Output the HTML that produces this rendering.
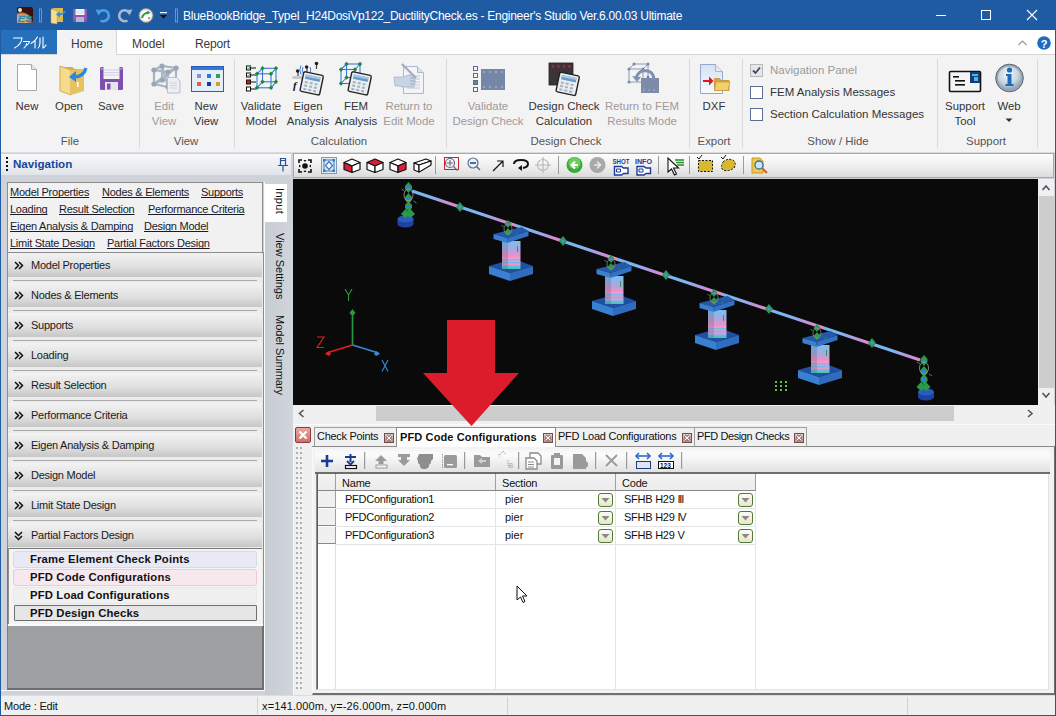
<!DOCTYPE html>
<html><head><meta charset="utf-8">
<style>
*{margin:0;padding:0;box-sizing:border-box}
html,body{width:1056px;height:716px;overflow:hidden;background:#f0f0f0;font-family:"Liberation Sans",sans-serif;position:relative}
.a{position:absolute}
.t{position:absolute;white-space:nowrap;line-height:1;text-decoration-skip-ink:none}
svg{position:absolute;overflow:visible}
</style></head><body>

<div class="a" style="left:0;top:0;width:1056px;height:30px;background:#1f5ba2"></div>
<svg style="left:0;top:0" width="200" height="30">
 <defs><radialGradient id="esg" cx="0.3" cy="0.7" r="0.8"><stop offset="0" stop-color="#f8d8a8"/><stop offset="0.6" stop-color="#d89868"/><stop offset="1" stop-color="#5a2010"/></radialGradient></defs>
 <rect x="17" y="7" width="16" height="16" rx="2" fill="#3a1008"/>
 <path d="M17 13 q6 -3 13 3 q2 3 3 7 h-16z" fill="url(#esg)"/><rect x="17" y="7" width="16" height="16" rx="2" fill="none"/>
 <circle cx="20" cy="10" r="2" fill="#e8e8e0"/>
 <text x="17.5" y="22" font-family="Liberation Sans" font-weight="bold" font-style="italic" font-size="8.5" fill="#28a8c8" stroke="#1a6a88" stroke-width="0.3" textLength="15" lengthAdjust="spacingAndGlyphs">ES</text>
 <rect x="39.5" y="9" width="2" height="13" fill="none" stroke="#8ab0d8" stroke-width="0.7"/>
 <path d="M51 9 l3 -1 h9 v14 h-9 l-3 1z" fill="#e0b850"/><path d="M51 9 l6 2 v13 l-6 -1z" fill="#f6e090" stroke="#c8a040" stroke-width="0.5"/>
 <path d="M65 11 q-1 3 -6 3.5" stroke="#2a90e8" stroke-width="2" fill="none"/><path d="M56 14.5 l4 -3 v6z" fill="#2a90e8"/>
 <rect x="73" y="9" width="14" height="13" rx="1" fill="#8a58b8"/><rect x="75.5" y="9" width="9" height="6" fill="#f4f4f8"/><path d="M76 11 h8 M76 13 h8" stroke="#c8c8d8" stroke-width="0.6"/><rect x="76" y="17" width="8" height="5" fill="#b8b8c0"/>
 <path d="M98.5 13 a5.5 5.5 0 1 1 2 7.5" stroke="#4aa0e8" stroke-width="2.6" fill="none"/><path d="M95.5 9.5 l6.5 0.5 l-3.5 5.5z" fill="#4aa0e8"/>
 <path d="M129.5 13 a5.5 5.5 0 1 0 -2 7.5" stroke="#a8b8cc" stroke-width="2.6" fill="none"/><path d="M132.5 9.5 l-6.5 0.5 l3.5 5.5z" fill="#a8b8cc"/>
 <circle cx="146" cy="15.5" r="7" fill="#e8e8e8" stroke="#8a8a8a" stroke-width="1"/><circle cx="146" cy="15.5" r="5" fill="#fff"/>
 <path d="M142 18 q1 -5 7 -5.5" stroke="#30a040" stroke-width="2.2" fill="none"/><path d="M147.5 10.5 l3 2.5 l-3.5 1.5z" fill="#30a040"/><circle cx="149" cy="18" r="0.9" fill="#d04040"/>
 <rect x="160" y="12" width="7" height="1.2" fill="#fff"/><path d="M160 15 h7 l-3.5 3.5z" fill="#111"/>
 <rect x="175.5" y="9" width="2" height="13" fill="none" stroke="#8ab0d8" stroke-width="0.7"/>
</svg>
<div class="t" style="left:183px;top:10px;font-size:12px;color:#fff;letter-spacing:-0.27px">BlueBookBridge_TypeI_H24DosiVp122_DuctilityCheck.es - Engineer's Studio Ver.6.00.03 Ultimate</div>
<svg style="left:920px;top:0" width="136" height="30">
 <rect x="16" y="15" width="10" height="1" fill="#fff"/>
 <rect x="61.5" y="10.5" width="9" height="9" fill="none" stroke="#fff" stroke-width="1"/>
 <path d="M107 10 l10 10 M117 10 l-10 10" stroke="#fff" stroke-width="1.1"/>
</svg>
<div class="a" style="left:0;top:0;width:1px;height:716px;background:#1f5ba2;z-index:9"></div>
<div class="a" style="left:1055px;top:0;width:1px;height:716px;background:#1f5ba2;z-index:9"></div>
<div class="a" style="left:0;top:715px;width:1056px;height:1px;background:#1f5ba2;z-index:9"></div>
<div class="a" style="left:1px;top:30px;width:1054px;height:25px;background:#fff"></div>
<div class="a" style="left:1px;top:54px;width:1054px;height:1px;background:#d5d5d5"></div>
<div class="a" style="left:1px;top:30px;width:56px;height:24px;background:#2470bd"></div>
<svg style="left:0;top:30px" width="60" height="25">
 <g stroke="#fff" stroke-width="1.1" fill="none" stroke-linecap="round">
 <path d="M13.5 8 h8.5 q-0.5 6.5 -7.5 10"/>
 <path d="M23.5 11.5 h6 q-0.5 2.5 -2.5 3.5 M26.5 13.5 q0 3 -2.5 4.5"/>
 <path d="M37.5 7 q-2 4 -6.5 6.5 M35 10.5 v7.5"/>
 <path d="M40 8 v5 q0 3 -1.8 5 M43 7 v11 q1.8 -0.8 3 -3"/>
 </g></svg>
<div class="a" style="left:57px;top:30px;width:60px;height:25px;background:#f3f3f3;border-right:1px solid #d5d5d5"></div>
<div class="t" style="left:71px;top:38px;font-size:12px;color:#3b3b3b">Home</div>
<div class="t" style="left:132px;top:38px;font-size:12px;color:#3b3b3b">Model</div>
<div class="t" style="left:195px;top:38px;font-size:12px;color:#3b3b3b;letter-spacing:-0.2px">Report</div>
<svg style="left:1010px;top:30px" width="46" height="25">
 <path d="M8.5 15 l4 -4 l4 4" stroke="#9a9a9a" stroke-width="1.2" fill="none"/>
 <circle cx="34" cy="13" r="6.8" fill="#1e6cc0"/>
 <text x="34" y="17.5" text-anchor="middle" font-family="Liberation Sans" font-weight="bold" font-size="11" fill="#fff">?</text>
</svg>
<div class="a" style="left:1px;top:55px;width:1054px;height:97px;background:#f3f3f3"></div>
<div class="a" style="left:1px;top:152px;width:1054px;height:1px;background:#d8dadd"></div>
<div class="a" style="left:139px;top:59px;width:1px;height:89px;background:#dadada"></div>
<div class="a" style="left:234px;top:59px;width:1px;height:89px;background:#dadada"></div>
<div class="a" style="left:446px;top:59px;width:1px;height:89px;background:#dadada"></div>
<div class="a" style="left:689px;top:59px;width:1px;height:89px;background:#dadada"></div>
<div class="a" style="left:742px;top:59px;width:1px;height:89px;background:#dadada"></div>
<div class="a" style="left:937px;top:59px;width:1px;height:89px;background:#dadada"></div>
<div class="a" style="left:1037px;top:59px;width:1px;height:89px;background:#dadada"></div>
<div class="t" style="left:-33px;width:120px;text-align:center;top:100.5px;font-size:11.4px;color:#333">New</div>
<div class="t" style="left:9px;width:120px;text-align:center;top:100.5px;font-size:11.4px;color:#333">Open</div>
<div class="t" style="left:51px;width:120px;text-align:center;top:100.5px;font-size:11.4px;color:#333">Save</div>
<div class="t" style="left:10px;width:120px;text-align:center;top:135.5px;font-size:11.4px;color:#555">File</div>
<div class="t" style="left:104px;width:120px;text-align:center;top:100.5px;font-size:11.4px;color:#a09a98">Edit</div>
<div class="t" style="left:104px;width:120px;text-align:center;top:115.5px;font-size:11.4px;color:#a09a98">View</div>
<div class="t" style="left:146px;width:120px;text-align:center;top:100.5px;font-size:11.4px;color:#333">New</div>
<div class="t" style="left:146px;width:120px;text-align:center;top:115.5px;font-size:11.4px;color:#333">View</div>
<div class="t" style="left:126px;width:120px;text-align:center;top:135.5px;font-size:11.4px;color:#555">View</div>
<div class="t" style="left:201px;width:120px;text-align:center;top:100.5px;font-size:11.4px;color:#333">Validate</div>
<div class="t" style="left:201px;width:120px;text-align:center;top:115.5px;font-size:11.4px;color:#333">Model</div>
<div class="t" style="left:248px;width:120px;text-align:center;top:100.5px;font-size:11.4px;color:#333">Eigen</div>
<div class="t" style="left:248px;width:120px;text-align:center;top:115.5px;font-size:11.4px;color:#333">Analysis</div>
<div class="t" style="left:296px;width:120px;text-align:center;top:100.5px;font-size:11.4px;color:#333">FEM</div>
<div class="t" style="left:296px;width:120px;text-align:center;top:115.5px;font-size:11.4px;color:#333">Analysis</div>
<div class="t" style="left:349px;width:120px;text-align:center;top:100.5px;font-size:11.4px;color:#a09a98">Return to</div>
<div class="t" style="left:349px;width:120px;text-align:center;top:115.5px;font-size:11.4px;color:#a09a98">Edit Mode</div>
<div class="t" style="left:279px;width:120px;text-align:center;top:135.5px;font-size:11.4px;color:#555">Calculation</div>
<div class="t" style="left:428px;width:120px;text-align:center;top:100.5px;font-size:11.4px;color:#a09a98">Validate</div>
<div class="t" style="left:428px;width:120px;text-align:center;top:115.5px;font-size:11.4px;color:#a09a98">Design Check</div>
<div class="t" style="left:504px;width:120px;text-align:center;top:100.5px;font-size:11.4px;color:#333">Design Check</div>
<div class="t" style="left:504px;width:120px;text-align:center;top:115.5px;font-size:11.4px;color:#333">Calculation</div>
<div class="t" style="left:582px;width:120px;text-align:center;top:100.5px;font-size:11.4px;color:#a09a98">Return to FEM</div>
<div class="t" style="left:582px;width:120px;text-align:center;top:115.5px;font-size:11.4px;color:#a09a98">Results Mode</div>
<div class="t" style="left:506px;width:120px;text-align:center;top:135.5px;font-size:11.4px;color:#555">Design Check</div>
<div class="t" style="left:654px;width:120px;text-align:center;top:100.5px;font-size:11.4px;color:#333">DXF</div>
<div class="t" style="left:654px;width:120px;text-align:center;top:135.5px;font-size:11.4px;color:#555">Export</div>
<div class="t" style="left:778px;width:120px;text-align:center;top:135.5px;font-size:11.4px;color:#555">Show / Hide</div>
<div class="t" style="left:905px;width:120px;text-align:center;top:100.5px;font-size:11.4px;color:#333">Support</div>
<div class="t" style="left:905px;width:120px;text-align:center;top:115.5px;font-size:11.4px;color:#333">Tool</div>
<div class="t" style="left:949px;width:120px;text-align:center;top:100.5px;font-size:11.4px;color:#333">Web</div>
<div class="t" style="left:926px;width:120px;text-align:center;top:135.5px;font-size:11.4px;color:#555">Support</div>
<svg style="left:1005px;top:118px" width="10" height="6"><path d="M0.5 0.5 h7 l-3.5 3.5z" fill="#333"/></svg>
<div class="a" style="left:750px;top:64px;width:13px;height:13px;background:#e6e6e6;border:1px solid #b8b8b8"></div>
<svg style="left:750px;top:64px" width="13" height="13"><path d="M3 6.5 l2.5 2.5 l4.5 -5.5" stroke="#3a4a66" stroke-width="1.8" fill="none"/></svg>
<div class="t" style="left:770px;top:65px;font-size:11.5px;color:#9a9a9a">Navigation Panel</div>
<div class="a" style="left:750px;top:86px;width:13px;height:13px;background:#fff;border:1px solid #5a6e96"></div>
<div class="t" style="left:770px;top:87px;font-size:11.5px;color:#333">FEM Analysis Messages</div>
<div class="a" style="left:750px;top:108px;width:13px;height:13px;background:#fff;border:1px solid #5a6e96"></div>
<div class="t" style="left:770px;top:109px;font-size:11.5px;color:#333">Section Calculation Messages</div>
<svg style="left:0;top:55px" width="1056" height="45">
 <!-- New -->
 <path d="M17.5 9.5 h14 l5 5 v21 h-19z" fill="#fff" stroke="#a8a8a8"/><path d="M31.5 9.5 v5 h5" fill="#e8e8e8" stroke="#a8a8a8"/>
 <!-- Open -->
 <path d="M62 12 h10 l3 2 h9 v22 h-22z" fill="#d8b048"/>
 <path d="M60 11 l11 4 v25 l-11 -4z" fill="#f4dc8c" stroke="#c8a040" stroke-width="0.8"/>
 <path d="M71 15 l13 -1 v22 l-13 4z" fill="#e6c260"/>
 <path d="M86 13 q-2 8 -11 9" stroke="#2a88e0" stroke-width="3.2" fill="none"/><path d="M69 22 l7 -6 v11z" fill="#2a88e0"/>
 <rect x="77" y="27" width="1.5" height="5" fill="#fff"/>
 <!-- Save -->
 <rect x="100" y="12" width="23" height="23" rx="1.5" fill="#7d4fb0"/>
 <rect x="103.5" y="12" width="16" height="12" fill="#f4f4f8"/><path d="M104 15 h15 M104 17.5 h15 M104 20 h15" stroke="#c8c8d8" stroke-width="0.8"/>
 <rect x="105" y="27" width="13" height="8" fill="#e4e4ea"/><rect x="107" y="28.5" width="3.5" height="6" fill="#7d4fb0"/>
 <circle cx="102" cy="14" r="0.8" fill="#e0d0f0"/><circle cx="121" cy="14" r="0.8" fill="#e0d0f0"/>
 <!-- Edit View (gray) -->
 <g stroke="#aab4c4" stroke-width="2.2" fill="none" stroke-linecap="round"><path d="M154 15 l8 -4 l14 2 l-8 4z M154 15 v14 l14 3 v-15 M176 13 v14 l-8 5 M162 11 v14 l14 2 M162 25 l-8 4 M154 29 l22 -16 M162 11 l6 21"/></g>
 <g fill="#9aa6b8"><circle cx="154" cy="15" r="2.6"/><circle cx="162" cy="11" r="2.6"/><circle cx="176" cy="13" r="2.6"/><circle cx="168" cy="17" r="2.6"/><circle cx="154" cy="29" r="2.6"/><circle cx="168" cy="32" r="2.6"/><circle cx="176" cy="27" r="2.6"/><circle cx="162" cy="25" r="2.6"/></g>
 <path d="M167.5 22.5 h9 l3.5 3.5 v12 h-12.5z" fill="#eceef2" stroke="#b8c0cc"/><path d="M170 28 h7 M170 30.5 h7 M170 33 h7" stroke="#c8ccd4" stroke-width="0.8"/>
 <!-- New View -->
 <rect x="191.5" y="11.5" width="32" height="25" fill="#e4eefa" stroke="#2a5cb8"/><rect x="192" y="12" width="31" height="3" fill="#3a78d0"/>
 <rect x="197" y="19" width="4" height="4" fill="#9a88c8"/><rect x="207" y="19" width="4" height="4" fill="#2a78c8"/><rect x="216" y="19" width="4" height="4" fill="#3aa040"/>
 <rect x="197" y="27" width="4" height="4" fill="#e86030"/><rect x="207" y="27" width="4" height="4" fill="#1a3a98"/><rect x="216" y="27" width="4" height="4" fill="#d8a020"/>
 <!-- Validate Model -->
 <g transform="translate(0 2.5)"><g stroke="#111" stroke-width="1"><rect x="246.5" y="8.5" width="4" height="4" fill="#fff"/><rect x="246.5" y="15.5" width="4" height="4" fill="#fff"/><rect x="246.5" y="22.5" width="4" height="4" fill="#e01818"/><rect x="246.5" y="29.5" width="4" height="4" fill="#fff"/>
 <path d="M251 10.5 h5 M251 17.5 h5 M251 24.5 h5 M251 31.5 h5"/></g>
 <path d="M247.5 10.5 l1 1 l2.5 -3 M247.5 17.5 l1 1 l2.5 -3" stroke="#1a9a30" stroke-width="1" fill="none"/></g>
 <g stroke="#3a7ad0" stroke-width="1.1"><line x1="262.5" y1="13.3" x2="276.0" y2="13.3"/><line x1="257.0" y1="18.8" x2="271.0" y2="18.8"/><line x1="262.5" y1="26.8" x2="276.0" y2="26.8"/><line x1="257.0" y1="32.8" x2="271.0" y2="32.8"/><line x1="262.5" y1="13.3" x2="257.0" y2="18.8"/><line x1="276.0" y1="13.3" x2="271.0" y2="18.8"/><line x1="262.5" y1="26.8" x2="257.0" y2="32.8"/><line x1="276.0" y1="26.8" x2="271.0" y2="32.8"/><line x1="262.5" y1="13.3" x2="262.5" y2="26.8"/><line x1="276.0" y1="13.3" x2="276.0" y2="26.8"/><line x1="257.0" y1="18.8" x2="257.0" y2="32.8"/><line x1="271.0" y1="18.8" x2="271.0" y2="32.8"/></g><g fill="#1a8a3a"><path d="M262.5 11.1 l2.2 2.2 l-2.2 2.2 l-2.2 -2.2z"/><path d="M276.0 11.1 l2.2 2.2 l-2.2 2.2 l-2.2 -2.2z"/><path d="M257.0 16.6 l2.2 2.2 l-2.2 2.2 l-2.2 -2.2z"/><path d="M271.0 16.6 l2.2 2.2 l-2.2 2.2 l-2.2 -2.2z"/><path d="M262.5 24.6 l2.2 2.2 l-2.2 2.2 l-2.2 -2.2z"/><path d="M276.0 24.6 l2.2 2.2 l-2.2 2.2 l-2.2 -2.2z"/><path d="M257.0 30.6 l2.2 2.2 l-2.2 2.2 l-2.2 -2.2z"/><path d="M271.0 30.6 l2.2 2.2 l-2.2 2.2 l-2.2 -2.2z"/></g>
 <!-- Eigen Analysis -->
 <rect x="292.5" y="21" width="10" height="3" fill="#c8c8c8"/>
 <path d="M298 21 v-5 M307 17 v-6 M316.5 14 v-7" stroke="#444" stroke-width="1.2"/>
 <circle cx="297.6" cy="16" r="1.8" fill="#222"/><circle cx="306.6" cy="12" r="1.8" fill="#222"/><circle cx="316.5" cy="8.5" r="1.8" fill="#222"/>
 <path d="M303 12 q-1.5 3 0 6 M301 10.5 q-2.5 4.5 0 9 M310 12 q1.5 3 0 6" stroke="#3a7ad0" stroke-width="1" fill="none"/>
 <g transform="translate(304 16.5) rotate(12)">
 <rect x="0" y="0" width="20" height="20" rx="1.5" fill="#e8eef4" stroke="#222" stroke-width="1.4"/>
 <rect x="2.5" y="2.5" width="15" height="4.5" fill="#6a9ac8"/><rect x="2.5" y="2.5" width="15" height="2" fill="#a8c8e8"/>
 <g fill="#a8b0b8"><rect x="3" y="9" width="3" height="2"/><rect x="8" y="9" width="3" height="2"/><rect x="13" y="9" width="3" height="2"/><rect x="3" y="12.5" width="3" height="2"/><rect x="8" y="12.5" width="3" height="2"/><rect x="13" y="12.5" width="3" height="2"/><rect x="3" y="16" width="3" height="2"/><rect x="8" y="16" width="3" height="2"/><rect x="13" y="16" width="3" height="2"/></g>
</g>
 <text x="293" y="33.5" font-family="Liberation Serif" font-weight="bold" font-style="italic" font-size="11" fill="#111">f</text>
 <!-- FEM Analysis -->
 <g stroke="#3a7ad0" stroke-width="1.1"><line x1="346.5" y1="9.0" x2="360.0" y2="9.0"/><line x1="341.0" y1="14.5" x2="355.0" y2="14.5"/><line x1="346.5" y1="22.5" x2="360.0" y2="22.5"/><line x1="341.0" y1="28.5" x2="355.0" y2="28.5"/><line x1="346.5" y1="9.0" x2="341.0" y2="14.5"/><line x1="360.0" y1="9.0" x2="355.0" y2="14.5"/><line x1="346.5" y1="22.5" x2="341.0" y2="28.5"/><line x1="360.0" y1="22.5" x2="355.0" y2="28.5"/><line x1="346.5" y1="9.0" x2="346.5" y2="22.5"/><line x1="360.0" y1="9.0" x2="360.0" y2="22.5"/><line x1="341.0" y1="14.5" x2="341.0" y2="28.5"/><line x1="355.0" y1="14.5" x2="355.0" y2="28.5"/></g><g fill="#1a8a3a"><path d="M346.5 6.8 l2.2 2.2 l-2.2 2.2 l-2.2 -2.2z"/><path d="M360.0 6.8 l2.2 2.2 l-2.2 2.2 l-2.2 -2.2z"/><path d="M341.0 12.3 l2.2 2.2 l-2.2 2.2 l-2.2 -2.2z"/><path d="M355.0 12.3 l2.2 2.2 l-2.2 2.2 l-2.2 -2.2z"/><path d="M346.5 20.3 l2.2 2.2 l-2.2 2.2 l-2.2 -2.2z"/><path d="M360.0 20.3 l2.2 2.2 l-2.2 2.2 l-2.2 -2.2z"/><path d="M341.0 26.3 l2.2 2.2 l-2.2 2.2 l-2.2 -2.2z"/><path d="M355.0 26.3 l2.2 2.2 l-2.2 2.2 l-2.2 -2.2z"/></g>
 <g transform="translate(352 16.5) rotate(12)">
 <rect x="0" y="0" width="20" height="20" rx="1.5" fill="#e8eef4" stroke="#222" stroke-width="1.4"/>
 <rect x="2.5" y="2.5" width="15" height="4.5" fill="#6a9ac8"/><rect x="2.5" y="2.5" width="15" height="2" fill="#a8c8e8"/>
 <g fill="#a8b0b8"><rect x="3" y="9" width="3" height="2"/><rect x="8" y="9" width="3" height="2"/><rect x="13" y="9" width="3" height="2"/><rect x="3" y="12.5" width="3" height="2"/><rect x="8" y="12.5" width="3" height="2"/><rect x="13" y="12.5" width="3" height="2"/><rect x="3" y="16" width="3" height="2"/><rect x="8" y="16" width="3" height="2"/><rect x="13" y="16" width="3" height="2"/></g>
</g>
 <!-- Return to Edit Mode (gray) -->
 <path d="M403.5 11.5 h14 l6 6 v21 h-20z" fill="#f2f4f8" stroke="#b0b8c8"/><path d="M417.5 11.5 v6 h6" fill="#dde2ea" stroke="#b0b8c8"/>
 <g stroke="#c0c8d4"><path d="M407 21 h13 M407 24 h13 M407 27 h13 M407 30 h13 M407 33 h13"/></g>
 <path d="M394 22 h10 l4 -2 h6 v3 h-4 h5 v3 h-5 h5 v3 h-5 h4 v3 h-11 l-4 -1 h-4z" fill="#c8d4e4" stroke="#a8b4c8" stroke-width="0.8"/>
 <path d="M402 9 l14 14" stroke="#a0acc0" stroke-width="2.2"/>
 <!-- Validate Design Check (gray) -->
 <g fill="none" stroke="#5a6a90"><rect x="473.5" y="11.5" width="4" height="4"/><rect x="473.5" y="18.5" width="4" height="4"/><rect x="473.5" y="25.5" width="4" height="4" fill="#7080a0"/><rect x="473.5" y="32.5" width="4" height="4"/></g>
 <rect x="481" y="14" width="24" height="21" fill="#7686a8"/><g fill="#98a4c0"><circle cx="484" cy="17" r="1.2"/><circle cx="490" cy="17" r="1.2"/><circle cx="496" cy="17" r="1.2"/><circle cx="502" cy="17" r="1.2"/><circle cx="484" cy="32" r="1.2"/><circle cx="490" cy="32" r="1.2"/><circle cx="496" cy="32" r="1.2"/><circle cx="502" cy="32" r="1.2"/></g>
 <!-- Design Check Calculation -->
 <rect x="549" y="8" width="24" height="22" fill="#3c3438" stroke="#222" stroke-width="0.8"/><g fill="#a02848"><circle cx="553" cy="11.5" r="1.4"/><circle cx="558.5" cy="11.5" r="1.4"/><circle cx="564" cy="11.5" r="1.4"/><circle cx="569.5" cy="11.5" r="1.4"/></g>
 <g transform="translate(560 17) rotate(12)">
 <rect x="0" y="0" width="20" height="20" rx="1.5" fill="#e8eef4" stroke="#222" stroke-width="1.4"/>
 <rect x="2.5" y="2.5" width="15" height="4.5" fill="#6a9ac8"/><rect x="2.5" y="2.5" width="15" height="2" fill="#a8c8e8"/>
 <g fill="#a8b0b8"><rect x="3" y="9" width="3" height="2"/><rect x="8" y="9" width="3" height="2"/><rect x="13" y="9" width="3" height="2"/><rect x="3" y="12.5" width="3" height="2"/><rect x="8" y="12.5" width="3" height="2"/><rect x="13" y="12.5" width="3" height="2"/><rect x="3" y="16" width="3" height="2"/><rect x="8" y="16" width="3" height="2"/><rect x="13" y="16" width="3" height="2"/></g>
 </g>
 <!-- Return to FEM Results Mode (gray) -->
 <g stroke="#8a9ab8" stroke-width="1" fill="none"><path d="M629 14 h14 v13 h-14z M634 9 h14 v13 M629 14 l5 -5 M643 14 l5 -5 M643 27 l5 -5"/></g>
 <g fill="#7a88a8"><circle cx="629" cy="14" r="1.5"/><circle cx="643" cy="14" r="1.5"/><circle cx="634" cy="9" r="1.5"/><circle cx="648" cy="9" r="1.5"/><circle cx="629" cy="27" r="1.5"/><circle cx="648" cy="22" r="1.5"/></g>
 <rect x="641" y="23" width="18" height="15" fill="#7d8aa8"/><g fill="#9aa6c0"><circle cx="644" cy="35" r="1"/><circle cx="649" cy="35" r="1"/><circle cx="654" cy="35" r="1"/></g>
 <path d="M636 24 q2 -10 12 -8 q6 2 6 9" stroke="#8090b0" stroke-width="3" fill="none"/><path d="M632 21 l5 6 l4 -5z" fill="#8090b0"/>
 <!-- DXF -->
 <defs><linearGradient id="dxfg" x1="0" y1="0" x2="0" y2="1"><stop offset="0" stop-color="#d4e2f4"/><stop offset="1" stop-color="#f8fafc"/></linearGradient></defs>
 <path d="M700.5 9.5 h15 l7 7 v22 h-22z" fill="url(#dxfg)" stroke="#9aa4d0"/><path d="M715.5 9.5 v7 h7" fill="#e8e8ee" stroke="#b0b4c8"/>
 <path d="M703 25 h6 v-3.5 l4.5 4.5 l-4.5 4.5 v-3.5 h-6z" fill="#e01818"/>
 <path d="M714.5 23.5 h5 l1.5 2 h8 v10 h-14.5z" fill="#d8a838" stroke="#b88820" stroke-width="0.7"/><path d="M716 27 h14 l-2 8.5 h-13.5z" fill="#f2d070" stroke="#c89a30" stroke-width="0.7"/>
 <!-- Support Tool -->
 <rect x="949.5" y="16.5" width="31" height="20" rx="1" fill="#f4f4f4" stroke="#111" stroke-width="1.6"/><rect x="970" y="17" width="10" height="11" fill="#1a3a78"/><rect x="972" y="19" width="6" height="2" fill="#40c0e0"/><rect x="974" y="22" width="4" height="4" fill="#40c0e0"/>
 <g fill="#111"><rect x="953" y="21" width="6" height="1.6"/><rect x="955" y="25" width="10" height="1.6"/><rect x="955" y="29" width="10" height="1.6"/></g>
 <!-- Web -->
 <defs><radialGradient id="webg" cx="0.45" cy="0.35" r="0.7"><stop offset="0" stop-color="#f4f8fc"/><stop offset="0.6" stop-color="#c8d4e0"/><stop offset="1" stop-color="#8898a8"/></radialGradient></defs>
 <circle cx="1009.5" cy="23" r="13.8" fill="#9aa8b4" stroke="#5a6470" stroke-width="1"/><circle cx="1009.5" cy="23" r="11.5" fill="url(#webg)"/>
 <circle cx="1009.5" cy="15" r="2.6" fill="#1e6cb8"/><path d="M1006 19 h5.5 v10 h2 v2 h-8 v-2 h2 v-8 h-1.5z" fill="#1e6cb8"/>
</svg>
<div class="a" style="left:1px;top:153px;width:1054px;height:542px;background:#cfd3d9"></div>
<div class="a" style="left:1px;top:154px;width:290px;height:21px;background:linear-gradient(#f7f8fa,#e1e5ea)"></div>
<svg style="left:0;top:150px" width="20" height="25"><g fill="#111"><rect x="6" y="7" width="2" height="2"/><rect x="6" y="11" width="2" height="2"/><rect x="6" y="15" width="2" height="2"/><rect x="6" y="19" width="2" height="2"/></g></svg>
<div class="t" style="left:13px;top:158px;font-size:11.6px;font-weight:bold;color:#17479a">Navigation</div>
<svg style="left:276.5px;top:155px" width="14" height="18"><path d="M3.5 3.5 h5 v7 h-5z M1 10.5 h10 M6 10.5 v6" stroke="#2a4f9a" stroke-width="1.2" fill="none"/><path d="M3.5 5.5 h5" stroke="#2a4f9a"/></svg>
<div class="a" style="left:7px;top:182px;width:256px;height:70px;background:#f1f1f1;border:1px solid #8c8c8c;border-bottom:none"></div>
<div class="t" style="left:10px;top:187px;font-size:11px;color:#1a1a2a;text-decoration:underline;letter-spacing:-0.25px">Model Properties</div>
<div class="t" style="left:102px;top:187px;font-size:11px;color:#1a1a2a;text-decoration:underline;letter-spacing:-0.25px">Nodes &amp; Elements</div>
<div class="t" style="left:201px;top:187px;font-size:11px;color:#1a1a2a;text-decoration:underline;letter-spacing:-0.25px">Supports</div>
<div class="t" style="left:10px;top:204px;font-size:11px;color:#1a1a2a;text-decoration:underline;letter-spacing:-0.25px">Loading</div>
<div class="t" style="left:59px;top:204px;font-size:11px;color:#1a1a2a;text-decoration:underline;letter-spacing:-0.25px">Result Selection</div>
<div class="t" style="left:148px;top:204px;font-size:11px;color:#1a1a2a;text-decoration:underline;letter-spacing:-0.25px">Performance Criteria</div>
<div class="t" style="left:10px;top:221px;font-size:11px;color:#1a1a2a;text-decoration:underline;letter-spacing:-0.25px">Eigen Analysis &amp; Damping</div>
<div class="t" style="left:144px;top:221px;font-size:11px;color:#1a1a2a;text-decoration:underline;letter-spacing:-0.25px">Design Model</div>
<div class="t" style="left:10px;top:238px;font-size:11px;color:#1a1a2a;text-decoration:underline;letter-spacing:-0.25px">Limit State Design</div>
<div class="t" style="left:107px;top:238px;font-size:11px;color:#1a1a2a;text-decoration:underline;letter-spacing:-0.25px">Partial Factors Design</div>
<div class="a" style="left:7px;top:252px;width:257px;height:374px;background:#e9e9e9;border-left:1px solid #8c8c8c;border-top:1px solid #8c8c8c"></div>
<div class="a" style="left:8px;top:253px;width:254px;height:24px;background:linear-gradient(#f3f3f3,#dedede 60%,#c6c6c6)"></div>
<div class="a" style="left:8px;top:277px;width:254px;height:6px;background:#ececec"></div>
<div class="a" style="left:13px;top:280px;width:244px;height:1px;background:#a8a8a8"></div>
<svg style="left:14px;top:261px" width="10" height="9"><path d="M1 1 l3.5 3.5 l-3.5 3.5 M5 1 l3.5 3.5 l-3.5 3.5" stroke="#111" stroke-width="1.5" fill="none"/></svg>
<div class="t" style="left:31px;top:260px;font-size:11px;color:#1a1a1a;letter-spacing:-0.25px">Model Properties</div>
<div class="a" style="left:8px;top:283px;width:254px;height:24px;background:linear-gradient(#f3f3f3,#dedede 60%,#c6c6c6)"></div>
<div class="a" style="left:8px;top:307px;width:254px;height:6px;background:#ececec"></div>
<div class="a" style="left:13px;top:310px;width:244px;height:1px;background:#a8a8a8"></div>
<svg style="left:14px;top:291px" width="10" height="9"><path d="M1 1 l3.5 3.5 l-3.5 3.5 M5 1 l3.5 3.5 l-3.5 3.5" stroke="#111" stroke-width="1.5" fill="none"/></svg>
<div class="t" style="left:31px;top:290px;font-size:11px;color:#1a1a1a;letter-spacing:-0.25px">Nodes &amp; Elements</div>
<div class="a" style="left:8px;top:313px;width:254px;height:24px;background:linear-gradient(#f3f3f3,#dedede 60%,#c6c6c6)"></div>
<div class="a" style="left:8px;top:337px;width:254px;height:6px;background:#ececec"></div>
<div class="a" style="left:13px;top:340px;width:244px;height:1px;background:#a8a8a8"></div>
<svg style="left:14px;top:321px" width="10" height="9"><path d="M1 1 l3.5 3.5 l-3.5 3.5 M5 1 l3.5 3.5 l-3.5 3.5" stroke="#111" stroke-width="1.5" fill="none"/></svg>
<div class="t" style="left:31px;top:320px;font-size:11px;color:#1a1a1a;letter-spacing:-0.25px">Supports</div>
<div class="a" style="left:8px;top:343px;width:254px;height:24px;background:linear-gradient(#f3f3f3,#dedede 60%,#c6c6c6)"></div>
<div class="a" style="left:8px;top:367px;width:254px;height:6px;background:#ececec"></div>
<div class="a" style="left:13px;top:370px;width:244px;height:1px;background:#a8a8a8"></div>
<svg style="left:14px;top:351px" width="10" height="9"><path d="M1 1 l3.5 3.5 l-3.5 3.5 M5 1 l3.5 3.5 l-3.5 3.5" stroke="#111" stroke-width="1.5" fill="none"/></svg>
<div class="t" style="left:31px;top:350px;font-size:11px;color:#1a1a1a;letter-spacing:-0.25px">Loading</div>
<div class="a" style="left:8px;top:373px;width:254px;height:24px;background:linear-gradient(#f3f3f3,#dedede 60%,#c6c6c6)"></div>
<div class="a" style="left:8px;top:397px;width:254px;height:6px;background:#ececec"></div>
<div class="a" style="left:13px;top:400px;width:244px;height:1px;background:#a8a8a8"></div>
<svg style="left:14px;top:381px" width="10" height="9"><path d="M1 1 l3.5 3.5 l-3.5 3.5 M5 1 l3.5 3.5 l-3.5 3.5" stroke="#111" stroke-width="1.5" fill="none"/></svg>
<div class="t" style="left:31px;top:380px;font-size:11px;color:#1a1a1a;letter-spacing:-0.25px">Result Selection</div>
<div class="a" style="left:8px;top:403px;width:254px;height:24px;background:linear-gradient(#f3f3f3,#dedede 60%,#c6c6c6)"></div>
<div class="a" style="left:8px;top:427px;width:254px;height:6px;background:#ececec"></div>
<div class="a" style="left:13px;top:430px;width:244px;height:1px;background:#a8a8a8"></div>
<svg style="left:14px;top:411px" width="10" height="9"><path d="M1 1 l3.5 3.5 l-3.5 3.5 M5 1 l3.5 3.5 l-3.5 3.5" stroke="#111" stroke-width="1.5" fill="none"/></svg>
<div class="t" style="left:31px;top:410px;font-size:11px;color:#1a1a1a;letter-spacing:-0.25px">Performance Criteria</div>
<div class="a" style="left:8px;top:433px;width:254px;height:24px;background:linear-gradient(#f3f3f3,#dedede 60%,#c6c6c6)"></div>
<div class="a" style="left:8px;top:457px;width:254px;height:6px;background:#ececec"></div>
<div class="a" style="left:13px;top:460px;width:244px;height:1px;background:#a8a8a8"></div>
<svg style="left:14px;top:441px" width="10" height="9"><path d="M1 1 l3.5 3.5 l-3.5 3.5 M5 1 l3.5 3.5 l-3.5 3.5" stroke="#111" stroke-width="1.5" fill="none"/></svg>
<div class="t" style="left:31px;top:440px;font-size:11px;color:#1a1a1a;letter-spacing:-0.25px">Eigen Analysis &amp; Damping</div>
<div class="a" style="left:8px;top:463px;width:254px;height:24px;background:linear-gradient(#f3f3f3,#dedede 60%,#c6c6c6)"></div>
<div class="a" style="left:8px;top:487px;width:254px;height:6px;background:#ececec"></div>
<div class="a" style="left:13px;top:490px;width:244px;height:1px;background:#a8a8a8"></div>
<svg style="left:14px;top:471px" width="10" height="9"><path d="M1 1 l3.5 3.5 l-3.5 3.5 M5 1 l3.5 3.5 l-3.5 3.5" stroke="#111" stroke-width="1.5" fill="none"/></svg>
<div class="t" style="left:31px;top:470px;font-size:11px;color:#1a1a1a;letter-spacing:-0.25px">Design Model</div>
<div class="a" style="left:8px;top:493px;width:254px;height:24px;background:linear-gradient(#f3f3f3,#dedede 60%,#c6c6c6)"></div>
<div class="a" style="left:8px;top:517px;width:254px;height:6px;background:#ececec"></div>
<div class="a" style="left:13px;top:520px;width:244px;height:1px;background:#a8a8a8"></div>
<svg style="left:14px;top:501px" width="10" height="9"><path d="M1 1 l3.5 3.5 l-3.5 3.5 M5 1 l3.5 3.5 l-3.5 3.5" stroke="#111" stroke-width="1.5" fill="none"/></svg>
<div class="t" style="left:31px;top:500px;font-size:11px;color:#1a1a1a;letter-spacing:-0.25px">Limit State Design</div>
<div class="a" style="left:8px;top:523px;width:254px;height:24px;background:linear-gradient(#f3f3f3,#dedede 60%,#c6c6c6)"></div>
<svg style="left:14px;top:531px" width="10" height="10"><path d="M1 1 l3.5 3.5 l3.5 -3.5 M1 5 l3.5 3.5 l3.5 -3.5" stroke="#111" stroke-width="1.5" fill="none"/></svg>
<div class="t" style="left:31px;top:530px;font-size:11px;color:#1a1a1a;letter-spacing:-0.25px">Partial Factors Design</div>
<div class="a" style="left:8px;top:548px;width:254px;height:1px;background:#7a7a7a"></div>
<div class="a" style="left:8px;top:549px;width:254px;height:75px;background:#f4f4f4"></div>
<div class="a" style="left:13px;top:551px;width:244px;height:17px;background:#e8e9f4;border:1px solid #d6d9ee;border-radius:3px"></div>
<div class="t" style="left:30px;top:554px;font-size:11.3px;font-weight:bold;color:#111;letter-spacing:0.15px">Frame Element Check Points</div>
<div class="a" style="left:13px;top:569px;width:244px;height:17px;background:#f6e8ee;border:1px solid #eec8d8;border-radius:3px"></div>
<div class="t" style="left:30px;top:572px;font-size:11.3px;font-weight:bold;color:#111;letter-spacing:0.15px">PFD Code Configurations</div>
<div class="a" style="left:13px;top:587px;width:244px;height:17px;background:#f0f0f0;border:1px solid #e8e8e8;border-radius:3px"></div>
<div class="t" style="left:30px;top:590px;font-size:11.3px;font-weight:bold;color:#111;letter-spacing:0.15px">PFD Load Configurations</div>
<div class="a" style="left:14px;top:605px;width:243px;height:16px;background:#e6e6e6;border:1px solid #6e6e6e;border-radius:1px"></div>
<div class="t" style="left:30px;top:608px;font-size:11.3px;font-weight:bold;color:#111;letter-spacing:0.15px">PFD Design Checks</div>
<div class="a" style="left:8px;top:624px;width:256px;height:2px;background:#fafafa"></div>
<div class="a" style="left:7px;top:548px;width:2px;height:76px;background:linear-gradient(90deg,#6a6a6a,#9a9a9a)"></div>
<div class="a" style="left:7px;top:626px;width:257px;height:64px;background:#9d9fa3;border-left:1px solid #7c7c7c;border-bottom:2px solid #6e6e6e;border-right:2px solid #6e6e6e"></div>
<div class="a" style="left:263px;top:252px;width:1px;height:374px;background:#8c8c8c"></div>
<div class="a" style="left:264px;top:182px;width:1px;height:509px;background:#fafafa"></div>
<div class="a" style="left:1px;top:690px;width:264px;height:1px;background:#fafafa"></div>
<div class="a" style="left:265px;top:183px;width:22px;height:39px;background:#fff;border-top:1px solid #b8d8e8"></div>
<div class="t" style="left:285px;top:187.5px;font-size:11px;color:#111;transform-origin:0 0;transform:rotate(90deg);letter-spacing:0.35px">Input</div>
<div class="a" style="left:265px;top:223px;width:28px;height:472px;background:linear-gradient(90deg,#c7cbd2,#d2d6dc)"></div>
<div class="t" style="left:285px;top:233px;font-size:11px;color:#111;transform-origin:0 0;transform:rotate(90deg);letter-spacing:0px">View Settings</div>
<div class="t" style="left:285px;top:315px;font-size:11px;color:#111;transform-origin:0 0;transform:rotate(90deg);letter-spacing:0px">Model Summary</div>
<div class="a" style="left:293px;top:153px;width:761px;height:25px;background:linear-gradient(#fdfdfd,#f0f0f0 50%,#dcdcdc);border:1px solid #a8a8a8"></div>
<svg style="left:290px;top:152px" width="766" height="26">
 <!-- 1 dashed box + dot -->
 <g stroke="#111" stroke-width="1.6" fill="none"><path d="M9 11 v-3 h3 M18 8 h3 v3 M21 17 v3 h-3 M12 20 h-3 v-3"/></g><g fill="#111"><path d="M13.5 8 h3 l-1.5 2z M13.5 20 h3 l-1.5 -2z M9 12.5 v3 l2 -1.5z M21 12.5 v3 l-2 -1.5z"/></g><circle cx="15" cy="14" r="2.8" fill="#111"/>
 <!-- 2 fit box -->
 <rect x="31.5" y="5.5" width="15" height="16" fill="#e2eaf4" stroke="#7a9ac0"/><g stroke="#3a78c0" stroke-width="1" fill="none"><path d="M34 8 h10 v11 h-10z"/></g><path d="M39 9.5 l3.5 4 l-3.5 4 l-3.5 -4z" fill="#fff" stroke="#3a78c0" stroke-width="1.2"/><g fill="#3a78c0"><rect x="33" y="7" width="2.5" height="2.5"/><rect x="42.5" y="7" width="2.5" height="2.5"/><rect x="33" y="17.5" width="2.5" height="2.5"/><rect x="42.5" y="17.5" width="2.5" height="2.5"/></g>
 <!-- 3 cubes -->
 <g stroke="#111" stroke-width="1.2" stroke-linejoin="round"><polygon points="54,10.5 62,7.0 70,10.5 62,14.0" fill="#fff"/><polygon points="54,10.5 62,14.0 62,20.5 54,17.5" fill="#d81e3a"/><polygon points="62,14.0 70,10.5 70,17.5 62,20.5" fill="#fff"/></g><g stroke="#111" stroke-width="1.2" stroke-linejoin="round"><polygon points="77,10.5 85,7.0 93,10.5 85,14.0" fill="#d81e3a"/><polygon points="77,10.5 85,14.0 85,20.5 77,17.5" fill="#fff"/><polygon points="85,14.0 93,10.5 93,17.5 85,20.5" fill="#fff"/></g><g stroke="#111" stroke-width="1.2" stroke-linejoin="round"><polygon points="100,10.5 108,7.0 116,10.5 108,14.0" fill="#fff"/><polygon points="100,10.5 108,14.0 108,20.5 100,17.5" fill="#fff"/><polygon points="108,14.0 116,10.5 116,17.5 108,20.5" fill="#d81e3a"/></g>
 <g stroke="#111" stroke-width="1.2" stroke-linejoin="round" fill="#fff"><polygon points="124,11 136,7 141,9 129,13"/><polygon points="124,11 129,13 129,20 124,18"/><polygon points="129,13 141,9 141,13 131,19 129,20"/></g>
 <rect x="145" y="4" width="1" height="18" fill="#9a9a9a"/>
 <!-- zoom window -->
 <rect x="154.5" y="5.5" width="14" height="12" fill="none" stroke="#d02030"/><circle cx="160" cy="11" r="4.5" fill="none" stroke="#5a6a80" stroke-width="1.2"/><path d="M157 11 h6 M160 8 v6 M163.5 14.5 l4 4" stroke="#5a6a80" stroke-width="1.1"/>
 <!-- zoom out -->
 <circle cx="183" cy="11" r="5" fill="#e8f0f8" stroke="#5a7090" stroke-width="1.2"/><path d="M180 11 h6" stroke="#2a4a90" stroke-width="1.6"/><path d="M186.5 14.5 l3.5 3.5" stroke="#5a6a80" stroke-width="1.4"/>
 <!-- arrow -->
 <path d="M203 19 l10 -10 M207 9 h6 v6" stroke="#111" stroke-width="1.2" fill="none"/>
 <!-- rotate -->
 <path d="M224 12 q0 -4 7 -4 q7 0 7 4 q0 3 -5 4" stroke="#111" stroke-width="2" fill="none"/><path d="M232 13 l-4 3 l4 3z" fill="#111"/>
 <!-- crosshair gray -->
 <circle cx="253" cy="13" r="5.5" fill="none" stroke="#b8b8b8" stroke-width="1.2"/><path d="M245 13 h16 M253 5 v16" stroke="#b8b8b8" stroke-width="1.2"/>
 <rect x="268" y="4" width="1" height="18" fill="#9a9a9a"/>
 <!-- green back -->
 <circle cx="284.5" cy="13" r="8" fill="#3aaa3a"/><circle cx="284.5" cy="11" r="6" fill="#6ccc5c"/><path d="M288 13 h-6 M285 9.5 l-3.5 3.5 l3.5 3.5" stroke="#fff" stroke-width="2" fill="none"/>
 <circle cx="307.5" cy="13" r="8" fill="#a8a8a8"/><path d="M304 13 h6 M307 9.5 l3.5 3.5 l-3.5 3.5" stroke="#e8e8e8" stroke-width="1.6" fill="none"/>
 <!-- SHOT / INFO -->
 <text x="322.5" y="12" font-family="Liberation Sans" font-weight="bold" font-size="6.6" fill="#1a3a98" textLength="17" lengthAdjust="spacingAndGlyphs">SHOT</text>
 <path d="M324.5 14.5 h7 l2 1.5 h4.5 v5.5 h-4.5 l-2 1.5 h-7z" fill="#fff" stroke="#1a3a98" stroke-width="1.4"/><path d="M326.5 17 h4 v3 h-4z" fill="none" stroke="#1a3a98" stroke-width="1"/>
 <text x="345" y="12" font-family="Liberation Sans" font-weight="bold" font-size="6.6" fill="#1a3a98" textLength="17" lengthAdjust="spacingAndGlyphs">INFO</text>
 <path d="M347 14.5 h7 l2 1.5 h4.5 v5.5 h-4.5 l-2 1.5 h-7z" fill="#fff" stroke="#1a3a98" stroke-width="1.4"/><path d="M349 17 h4 v3 h-4z" fill="none" stroke="#1a3a98" stroke-width="1"/>
 <rect x="368" y="4" width="1" height="18" fill="#9a9a9a"/>
 <!-- select -->
 <path d="M378 6 l0 14 l3.5 -3 l3 6 l2 -1 l-3 -6 l5 0z" fill="#fff" stroke="#111" stroke-width="1.1"/>
 <path d="M385 8 h9 M386 10.5 h8 M387 13 h7" stroke="#2a8a2a" stroke-width="1.3"/>
 <rect x="399" y="4" width="1" height="18" fill="#9a9a9a"/>
 <rect x="408.5" y="8.5" width="14" height="11" fill="#d8b830" stroke="#111" stroke-dasharray="2 1.5"/><path d="M407 5 l2 2 l3 -4" stroke="#111" fill="none"/>
 <path d="M433 10 q4 -4 10 -2 q4 3 1 8 q-5 4 -11 2 q-3 -3 0 -8z" fill="#d8b830" stroke="#111" stroke-dasharray="2 1.5"/><path d="M431 5 l2 2 l3 -4" stroke="#111" fill="none"/>
 <rect x="453" y="4" width="1" height="18" fill="#9a9a9a"/>
 <path d="M462 6 h8 l3 3 v12 h-11z" fill="#f0c850" stroke="#c89820"/><circle cx="469" cy="13" r="4" fill="#c8e8f8" stroke="#3a6aa0" stroke-width="1.3"/><path d="M472 16 l5 5" stroke="#e06020" stroke-width="2"/>
</svg>
<div class="a" style="left:293px;top:179px;width:745px;height:226px;background:#0a0a0a"></div>
<div class="a" style="left:1038px;top:179px;width:16px;height:226px;background:#f0f0f0"></div>
<div class="a" style="left:1039px;top:196px;width:15px;height:192px;background:#cdcdcd"></div>
<svg style="left:1038px;top:179px" width="16" height="226"><path d="M4.5 11 l3.5 -4 l3.5 4" stroke="#555" stroke-width="1.6" fill="none"/><path d="M4.5 214 l3.5 4 l3.5 -4" stroke="#555" stroke-width="1.6" fill="none"/></svg>
<div class="a" style="left:293px;top:405px;width:762px;height:20px;background:#f0f0f0"></div>
<div class="a" style="left:376px;top:406px;width:578px;height:15px;background:#cdcdcd"></div>
<div class="a" style="left:293px;top:424px;width:762px;height:1px;background:#fbfbfb"></div>
<svg style="left:293px;top:405px" width="762" height="20"><path d="M10.5 5 l-4 3.5 l4 3.5" stroke="#555" stroke-width="1.6" fill="none"/><path d="M735 5 l4 3.5 l-4 3.5" stroke="#555" stroke-width="1.6" fill="none"/></svg>
<svg style="left:0;top:0" width="1056" height="716"><defs><linearGradient id="colg" x1="0" y1="0" x2="0" y2="1"><stop offset="0" stop-color="#78c0f0"/><stop offset="0.3" stop-color="#a8a8e0"/><stop offset="0.55" stop-color="#f090c8"/><stop offset="0.62" stop-color="#f0a0d0"/><stop offset="0.66" stop-color="#78b8f0"/><stop offset="0.72" stop-color="#f098c8"/><stop offset="0.77" stop-color="#78b8f0"/><stop offset="0.83" stop-color="#f098c8"/><stop offset="0.9" stop-color="#70b8e8"/><stop offset="1" stop-color="#40c8a0"/></linearGradient><linearGradient id="gird" gradientUnits="userSpaceOnUse" x1="412" y1="191" x2="463.5" y2="208.1" spreadMethod="repeat"><stop offset="0" stop-color="#70b8f4"/><stop offset="0.35" stop-color="#80b4f0"/><stop offset="0.7" stop-color="#c890d8"/><stop offset="1" stop-color="#f088c0"/></linearGradient></defs><line x1="412" y1="191" x2="920" y2="360" stroke="url(#gird)" stroke-width="3.2"/><polygon points="489.0,266.0 514.0,259.0 533.0,266.0 510.0,273.0" fill="#1f50a4"/><polygon points="489.0,266.0 510.0,273.0 510.0,281.0 489.0,274.0" fill="#3a80d2"/><polygon points="510.0,273.0 533.0,266.0 533.0,274.0 510.0,281.0" fill="#2f6cc0"/><rect x="502.0" y="241" width="18.5" height="28" fill="url(#colg)"/><rect x="502.0" y="241" width="6" height="28" fill="#000" opacity="0.12"/><polygon points="493.5,234.0 521.5,227.0 528.5,231.0 507.5,238.0" fill="#2558aa"/><polygon points="493.5,234.0 507.5,238.0 507.5,243.0 493.5,239.0" fill="#3a7fd0"/><polygon points="507.5,238.0 528.5,231.0 528.5,236.0 507.5,243.0" fill="#3272c6"/><path d="M508.0 220 l3.5 4 l-3.5 4 l-3.5 -4z" fill="#2a9a48"/><circle cx="508.0" cy="224" r="1.6" fill="#3a7ad8"/><path d="M508.0 228 l3.5 4 l-3.5 4 l-3.5 -4z" fill="#2a9a48"/><ellipse cx="508.0" cy="229" rx="4" ry="5" fill="none" stroke="#a09080" stroke-width="0.7"/><path d="M501.5 225 l2 2 M515.5 235 l2 -2 M517.5 246 v6" stroke="#2a9a48" stroke-width="1"/><polygon points="592.0,301.0 617.0,294.0 636.0,301.0 613.0,308.0" fill="#1f50a4"/><polygon points="592.0,301.0 613.0,308.0 613.0,316.0 592.0,309.0" fill="#3a80d2"/><polygon points="613.0,308.0 636.0,301.0 636.0,309.0 613.0,316.0" fill="#2f6cc0"/><rect x="605.0" y="276" width="18.5" height="28" fill="url(#colg)"/><rect x="605.0" y="276" width="6" height="28" fill="#000" opacity="0.12"/><polygon points="596.5,269.0 624.5,262.0 631.5,266.0 610.5,273.0" fill="#2558aa"/><polygon points="596.5,269.0 610.5,273.0 610.5,278.0 596.5,274.0" fill="#3a7fd0"/><polygon points="610.5,273.0 631.5,266.0 631.5,271.0 610.5,278.0" fill="#3272c6"/><path d="M611.0 255 l3.5 4 l-3.5 4 l-3.5 -4z" fill="#2a9a48"/><circle cx="611.0" cy="259" r="1.6" fill="#3a7ad8"/><path d="M611.0 263 l3.5 4 l-3.5 4 l-3.5 -4z" fill="#2a9a48"/><ellipse cx="611.0" cy="264" rx="4" ry="5" fill="none" stroke="#a09080" stroke-width="0.7"/><path d="M604.5 260 l2 2 M618.5 270 l2 -2 M620.5 281 v6" stroke="#2a9a48" stroke-width="1"/><polygon points="695.0,335.0 720.0,328.0 739.0,335.0 716.0,342.0" fill="#1f50a4"/><polygon points="695.0,335.0 716.0,342.0 716.0,350.0 695.0,343.0" fill="#3a80d2"/><polygon points="716.0,342.0 739.0,335.0 739.0,343.0 716.0,350.0" fill="#2f6cc0"/><rect x="708.0" y="310" width="18.5" height="28" fill="url(#colg)"/><rect x="708.0" y="310" width="6" height="28" fill="#000" opacity="0.12"/><polygon points="699.5,303.0 727.5,296.0 734.5,300.0 713.5,307.0" fill="#2558aa"/><polygon points="699.5,303.0 713.5,307.0 713.5,312.0 699.5,308.0" fill="#3a7fd0"/><polygon points="713.5,307.0 734.5,300.0 734.5,305.0 713.5,312.0" fill="#3272c6"/><path d="M714.0 289 l3.5 4 l-3.5 4 l-3.5 -4z" fill="#2a9a48"/><circle cx="714.0" cy="293" r="1.6" fill="#3a7ad8"/><path d="M714.0 297 l3.5 4 l-3.5 4 l-3.5 -4z" fill="#2a9a48"/><ellipse cx="714.0" cy="298" rx="4" ry="5" fill="none" stroke="#a09080" stroke-width="0.7"/><path d="M707.5 294 l2 2 M721.5 304 l2 -2 M723.5 315 v6" stroke="#2a9a48" stroke-width="1"/><polygon points="798.0,370.0 823.0,363.0 842.0,370.0 819.0,377.0" fill="#1f50a4"/><polygon points="798.0,370.0 819.0,377.0 819.0,385.0 798.0,378.0" fill="#3a80d2"/><polygon points="819.0,377.0 842.0,370.0 842.0,378.0 819.0,385.0" fill="#2f6cc0"/><rect x="811.0" y="345" width="18.5" height="28" fill="url(#colg)"/><rect x="811.0" y="345" width="6" height="28" fill="#000" opacity="0.12"/><polygon points="802.5,338.0 830.5,331.0 837.5,335.0 816.5,342.0" fill="#2558aa"/><polygon points="802.5,338.0 816.5,342.0 816.5,347.0 802.5,343.0" fill="#3a7fd0"/><polygon points="816.5,342.0 837.5,335.0 837.5,340.0 816.5,347.0" fill="#3272c6"/><path d="M817.0 324 l3.5 4 l-3.5 4 l-3.5 -4z" fill="#2a9a48"/><circle cx="817.0" cy="328" r="1.6" fill="#3a7ad8"/><path d="M817.0 332 l3.5 4 l-3.5 4 l-3.5 -4z" fill="#2a9a48"/><ellipse cx="817.0" cy="333" rx="4" ry="5" fill="none" stroke="#a09080" stroke-width="0.7"/><path d="M810.5 329 l2 2 M824.5 339 l2 -2 M826.5 350 v6" stroke="#2a9a48" stroke-width="1"/><path d="M397.5 219 v5 a8 3.5 0 0 0 16 0 v-5z" fill="#1e44a0"/><ellipse cx="405.5" cy="219" rx="8" ry="3.5" fill="#2a5cc0"/><path d="M405.5 209 l4.5 5 l-4.5 4 l-4.5 -4z M410.5 209 l4.5 5 l-4.5 4 l-4.5 -4z" fill="#2a9a48"/><path d="M408.5 182 l3.5 4 l0 3 l-3.5 4 l-3.5 -4 l0 -3z" fill="#2a9a48"/><rect x="406.5" y="186" width="4" height="3" fill="#3a7ad8"/><path d="M408.5 193 l3.5 4 l0 3 l-3.5 4 l-3.5 -4 l0 -3z" fill="#2a9a48"/><rect x="406.5" y="197" width="4" height="3" fill="#3a7ad8"/><path d="M408.5 201 l3.5 4 l0 3 l-3.5 4 l-3.5 -4 l0 -3z" fill="#2a9a48"/><rect x="406.5" y="205" width="4" height="3" fill="#3a7ad8"/><ellipse cx="408.5" cy="195" rx="4.5" ry="6" fill="none" stroke="#a8a098" stroke-width="0.8"/><path d="M401.5 189 l3 2 M413.5 201 l3 2" stroke="#2a9a48" stroke-width="1"/><path d="M918 392 v5 a8 3.5 0 0 0 16 0 v-5z" fill="#1e44a0"/><ellipse cx="926" cy="392" rx="8" ry="3.5" fill="#2a5cc0"/><path d="M921 382 l4.5 5 l-4.5 4 l-4.5 -4z M926 382 l4.5 5 l-4.5 4 l-4.5 -4z" fill="#2a9a48"/><path d="M924 355 l3.5 4 l0 3 l-3.5 4 l-3.5 -4 l0 -3z" fill="#2a9a48"/><rect x="922" y="359" width="4" height="3" fill="#3a7ad8"/><path d="M924 366 l3.5 4 l0 3 l-3.5 4 l-3.5 -4 l0 -3z" fill="#2a9a48"/><rect x="922" y="370" width="4" height="3" fill="#3a7ad8"/><path d="M924 374 l3.5 4 l0 3 l-3.5 4 l-3.5 -4 l0 -3z" fill="#2a9a48"/><rect x="922" y="378" width="4" height="3" fill="#3a7ad8"/><ellipse cx="924" cy="368" rx="4.5" ry="6" fill="none" stroke="#a8a098" stroke-width="0.8"/><path d="M917 362 l3 2 M929 374 l3 2" stroke="#2a9a48" stroke-width="1"/><path d="M460 202 l4 5 l-4 5 l-4 -5z" fill="#2a9a50"/><circle cx="460" cy="207" r="1.6" fill="#4a90e0"/><path d="M563 236 l4 5 l-4 5 l-4 -5z" fill="#2a9a50"/><circle cx="563" cy="241" r="1.6" fill="#4a90e0"/><path d="M666 270 l4 5 l-4 5 l-4 -5z" fill="#2a9a50"/><circle cx="666" cy="275" r="1.6" fill="#4a90e0"/><path d="M769 304 l4 5 l-4 5 l-4 -5z" fill="#2a9a50"/><circle cx="769" cy="309" r="1.6" fill="#4a90e0"/><path d="M872 338 l4 5 l-4 5 l-4 -5z" fill="#2a9a50"/><circle cx="872" cy="343" r="1.6" fill="#4a90e0"/><path d="M352.5 345 v-33" stroke="#2a9a3a" stroke-width="1.6"/><path d="M352.5 309 l3 4 l-3 3 l-3 -3z" fill="#2a9a3a"/><path d="M352.5 345 l-26 8" stroke="#e02020" stroke-width="1.6"/><path d="M325 354 l4 -3 l2 3 l-2 2z" fill="#e02020"/><path d="M352.5 345 l26 8" stroke="#3a88d8" stroke-width="1.6"/><path d="M380 354 l-4 -3 l-2 3 l2 2z" fill="#3a88d8"/><path d="M345 289 l3.5 6 l3.5 -6 M348.5 295 v6" stroke="#2a9a3a" stroke-width="1.1" fill="none"/><path d="M317 337 h7 l-7 10.5 h7" stroke="#e02020" stroke-width="1.1" fill="none"/><path d="M382 360 l6 11.5 M388 360 l-6 11.5" stroke="#3a88d8" stroke-width="1.1" fill="none"/><rect x="775" y="381" width="2" height="2" fill="#60c040"/><rect x="780" y="381" width="2" height="2" fill="#60c040"/><rect x="785" y="381" width="2" height="2" fill="#60c040"/><rect x="775" y="385" width="2" height="2" fill="#60c040"/><rect x="780" y="385" width="2" height="2" fill="#60c040"/><rect x="785" y="385" width="2" height="2" fill="#60c040"/><rect x="775" y="389" width="2" height="2" fill="#60c040"/><rect x="780" y="389" width="2" height="2" fill="#60c040"/><rect x="785" y="389" width="2" height="2" fill="#60c040"/></svg>
<div class="a" style="left:293px;top:425px;width:762px;height:271px;background:#f0f0f0"></div>
<div class="a" style="left:293px;top:446px;width:19px;height:249px;background:#efefef;border-left:1px solid #f8f8f8"></div>
<svg style="left:0;top:0" width="320" height="716"><rect x="296" y="447" width="2" height="2" fill="#b0b0b0"/><rect x="300" y="447" width="2" height="2" fill="#b0b0b0"/><rect x="298" y="446" width="1" height="1" fill="#fff"/><rect x="302" y="446" width="1" height="1" fill="#fff"/><rect x="296" y="452" width="2" height="2" fill="#b0b0b0"/><rect x="300" y="452" width="2" height="2" fill="#b0b0b0"/><rect x="298" y="451" width="1" height="1" fill="#fff"/><rect x="302" y="451" width="1" height="1" fill="#fff"/><rect x="296" y="457" width="2" height="2" fill="#b0b0b0"/><rect x="300" y="457" width="2" height="2" fill="#b0b0b0"/><rect x="298" y="456" width="1" height="1" fill="#fff"/><rect x="302" y="456" width="1" height="1" fill="#fff"/><rect x="296" y="462" width="2" height="2" fill="#b0b0b0"/><rect x="300" y="462" width="2" height="2" fill="#b0b0b0"/><rect x="298" y="461" width="1" height="1" fill="#fff"/><rect x="302" y="461" width="1" height="1" fill="#fff"/><rect x="296" y="467" width="2" height="2" fill="#b0b0b0"/><rect x="300" y="467" width="2" height="2" fill="#b0b0b0"/><rect x="298" y="466" width="1" height="1" fill="#fff"/><rect x="302" y="466" width="1" height="1" fill="#fff"/><rect x="296" y="472" width="2" height="2" fill="#b0b0b0"/><rect x="300" y="472" width="2" height="2" fill="#b0b0b0"/><rect x="298" y="471" width="1" height="1" fill="#fff"/><rect x="302" y="471" width="1" height="1" fill="#fff"/><rect x="296" y="477" width="2" height="2" fill="#b0b0b0"/><rect x="300" y="477" width="2" height="2" fill="#b0b0b0"/><rect x="298" y="476" width="1" height="1" fill="#fff"/><rect x="302" y="476" width="1" height="1" fill="#fff"/><rect x="296" y="482" width="2" height="2" fill="#b0b0b0"/><rect x="300" y="482" width="2" height="2" fill="#b0b0b0"/><rect x="298" y="481" width="1" height="1" fill="#fff"/><rect x="302" y="481" width="1" height="1" fill="#fff"/><rect x="296" y="487" width="2" height="2" fill="#b0b0b0"/><rect x="300" y="487" width="2" height="2" fill="#b0b0b0"/><rect x="298" y="486" width="1" height="1" fill="#fff"/><rect x="302" y="486" width="1" height="1" fill="#fff"/><rect x="296" y="492" width="2" height="2" fill="#b0b0b0"/><rect x="300" y="492" width="2" height="2" fill="#b0b0b0"/><rect x="298" y="491" width="1" height="1" fill="#fff"/><rect x="302" y="491" width="1" height="1" fill="#fff"/><rect x="296" y="497" width="2" height="2" fill="#b0b0b0"/><rect x="300" y="497" width="2" height="2" fill="#b0b0b0"/><rect x="298" y="496" width="1" height="1" fill="#fff"/><rect x="302" y="496" width="1" height="1" fill="#fff"/><rect x="296" y="502" width="2" height="2" fill="#b0b0b0"/><rect x="300" y="502" width="2" height="2" fill="#b0b0b0"/><rect x="298" y="501" width="1" height="1" fill="#fff"/><rect x="302" y="501" width="1" height="1" fill="#fff"/><rect x="296" y="507" width="2" height="2" fill="#b0b0b0"/><rect x="300" y="507" width="2" height="2" fill="#b0b0b0"/><rect x="298" y="506" width="1" height="1" fill="#fff"/><rect x="302" y="506" width="1" height="1" fill="#fff"/><rect x="296" y="512" width="2" height="2" fill="#b0b0b0"/><rect x="300" y="512" width="2" height="2" fill="#b0b0b0"/><rect x="298" y="511" width="1" height="1" fill="#fff"/><rect x="302" y="511" width="1" height="1" fill="#fff"/><rect x="296" y="517" width="2" height="2" fill="#b0b0b0"/><rect x="300" y="517" width="2" height="2" fill="#b0b0b0"/><rect x="298" y="516" width="1" height="1" fill="#fff"/><rect x="302" y="516" width="1" height="1" fill="#fff"/><rect x="296" y="522" width="2" height="2" fill="#b0b0b0"/><rect x="300" y="522" width="2" height="2" fill="#b0b0b0"/><rect x="298" y="521" width="1" height="1" fill="#fff"/><rect x="302" y="521" width="1" height="1" fill="#fff"/><rect x="296" y="527" width="2" height="2" fill="#b0b0b0"/><rect x="300" y="527" width="2" height="2" fill="#b0b0b0"/><rect x="298" y="526" width="1" height="1" fill="#fff"/><rect x="302" y="526" width="1" height="1" fill="#fff"/><rect x="296" y="532" width="2" height="2" fill="#b0b0b0"/><rect x="300" y="532" width="2" height="2" fill="#b0b0b0"/><rect x="298" y="531" width="1" height="1" fill="#fff"/><rect x="302" y="531" width="1" height="1" fill="#fff"/><rect x="296" y="537" width="2" height="2" fill="#b0b0b0"/><rect x="300" y="537" width="2" height="2" fill="#b0b0b0"/><rect x="298" y="536" width="1" height="1" fill="#fff"/><rect x="302" y="536" width="1" height="1" fill="#fff"/><rect x="296" y="542" width="2" height="2" fill="#b0b0b0"/><rect x="300" y="542" width="2" height="2" fill="#b0b0b0"/><rect x="298" y="541" width="1" height="1" fill="#fff"/><rect x="302" y="541" width="1" height="1" fill="#fff"/><rect x="296" y="547" width="2" height="2" fill="#b0b0b0"/><rect x="300" y="547" width="2" height="2" fill="#b0b0b0"/><rect x="298" y="546" width="1" height="1" fill="#fff"/><rect x="302" y="546" width="1" height="1" fill="#fff"/><rect x="296" y="552" width="2" height="2" fill="#b0b0b0"/><rect x="300" y="552" width="2" height="2" fill="#b0b0b0"/><rect x="298" y="551" width="1" height="1" fill="#fff"/><rect x="302" y="551" width="1" height="1" fill="#fff"/><rect x="296" y="557" width="2" height="2" fill="#b0b0b0"/><rect x="300" y="557" width="2" height="2" fill="#b0b0b0"/><rect x="298" y="556" width="1" height="1" fill="#fff"/><rect x="302" y="556" width="1" height="1" fill="#fff"/><rect x="296" y="562" width="2" height="2" fill="#b0b0b0"/><rect x="300" y="562" width="2" height="2" fill="#b0b0b0"/><rect x="298" y="561" width="1" height="1" fill="#fff"/><rect x="302" y="561" width="1" height="1" fill="#fff"/><rect x="296" y="567" width="2" height="2" fill="#b0b0b0"/><rect x="300" y="567" width="2" height="2" fill="#b0b0b0"/><rect x="298" y="566" width="1" height="1" fill="#fff"/><rect x="302" y="566" width="1" height="1" fill="#fff"/><rect x="296" y="572" width="2" height="2" fill="#b0b0b0"/><rect x="300" y="572" width="2" height="2" fill="#b0b0b0"/><rect x="298" y="571" width="1" height="1" fill="#fff"/><rect x="302" y="571" width="1" height="1" fill="#fff"/><rect x="296" y="577" width="2" height="2" fill="#b0b0b0"/><rect x="300" y="577" width="2" height="2" fill="#b0b0b0"/><rect x="298" y="576" width="1" height="1" fill="#fff"/><rect x="302" y="576" width="1" height="1" fill="#fff"/><rect x="296" y="582" width="2" height="2" fill="#b0b0b0"/><rect x="300" y="582" width="2" height="2" fill="#b0b0b0"/><rect x="298" y="581" width="1" height="1" fill="#fff"/><rect x="302" y="581" width="1" height="1" fill="#fff"/><rect x="296" y="587" width="2" height="2" fill="#b0b0b0"/><rect x="300" y="587" width="2" height="2" fill="#b0b0b0"/><rect x="298" y="586" width="1" height="1" fill="#fff"/><rect x="302" y="586" width="1" height="1" fill="#fff"/><rect x="296" y="592" width="2" height="2" fill="#b0b0b0"/><rect x="300" y="592" width="2" height="2" fill="#b0b0b0"/><rect x="298" y="591" width="1" height="1" fill="#fff"/><rect x="302" y="591" width="1" height="1" fill="#fff"/><rect x="296" y="597" width="2" height="2" fill="#b0b0b0"/><rect x="300" y="597" width="2" height="2" fill="#b0b0b0"/><rect x="298" y="596" width="1" height="1" fill="#fff"/><rect x="302" y="596" width="1" height="1" fill="#fff"/><rect x="296" y="602" width="2" height="2" fill="#b0b0b0"/><rect x="300" y="602" width="2" height="2" fill="#b0b0b0"/><rect x="298" y="601" width="1" height="1" fill="#fff"/><rect x="302" y="601" width="1" height="1" fill="#fff"/><rect x="296" y="607" width="2" height="2" fill="#b0b0b0"/><rect x="300" y="607" width="2" height="2" fill="#b0b0b0"/><rect x="298" y="606" width="1" height="1" fill="#fff"/><rect x="302" y="606" width="1" height="1" fill="#fff"/><rect x="296" y="612" width="2" height="2" fill="#b0b0b0"/><rect x="300" y="612" width="2" height="2" fill="#b0b0b0"/><rect x="298" y="611" width="1" height="1" fill="#fff"/><rect x="302" y="611" width="1" height="1" fill="#fff"/><rect x="296" y="617" width="2" height="2" fill="#b0b0b0"/><rect x="300" y="617" width="2" height="2" fill="#b0b0b0"/><rect x="298" y="616" width="1" height="1" fill="#fff"/><rect x="302" y="616" width="1" height="1" fill="#fff"/><rect x="296" y="622" width="2" height="2" fill="#b0b0b0"/><rect x="300" y="622" width="2" height="2" fill="#b0b0b0"/><rect x="298" y="621" width="1" height="1" fill="#fff"/><rect x="302" y="621" width="1" height="1" fill="#fff"/><rect x="296" y="627" width="2" height="2" fill="#b0b0b0"/><rect x="300" y="627" width="2" height="2" fill="#b0b0b0"/><rect x="298" y="626" width="1" height="1" fill="#fff"/><rect x="302" y="626" width="1" height="1" fill="#fff"/><rect x="296" y="632" width="2" height="2" fill="#b0b0b0"/><rect x="300" y="632" width="2" height="2" fill="#b0b0b0"/><rect x="298" y="631" width="1" height="1" fill="#fff"/><rect x="302" y="631" width="1" height="1" fill="#fff"/><rect x="296" y="637" width="2" height="2" fill="#b0b0b0"/><rect x="300" y="637" width="2" height="2" fill="#b0b0b0"/><rect x="298" y="636" width="1" height="1" fill="#fff"/><rect x="302" y="636" width="1" height="1" fill="#fff"/><rect x="296" y="642" width="2" height="2" fill="#b0b0b0"/><rect x="300" y="642" width="2" height="2" fill="#b0b0b0"/><rect x="298" y="641" width="1" height="1" fill="#fff"/><rect x="302" y="641" width="1" height="1" fill="#fff"/><rect x="296" y="647" width="2" height="2" fill="#b0b0b0"/><rect x="300" y="647" width="2" height="2" fill="#b0b0b0"/><rect x="298" y="646" width="1" height="1" fill="#fff"/><rect x="302" y="646" width="1" height="1" fill="#fff"/><rect x="296" y="652" width="2" height="2" fill="#b0b0b0"/><rect x="300" y="652" width="2" height="2" fill="#b0b0b0"/><rect x="298" y="651" width="1" height="1" fill="#fff"/><rect x="302" y="651" width="1" height="1" fill="#fff"/><rect x="296" y="657" width="2" height="2" fill="#b0b0b0"/><rect x="300" y="657" width="2" height="2" fill="#b0b0b0"/><rect x="298" y="656" width="1" height="1" fill="#fff"/><rect x="302" y="656" width="1" height="1" fill="#fff"/><rect x="296" y="662" width="2" height="2" fill="#b0b0b0"/><rect x="300" y="662" width="2" height="2" fill="#b0b0b0"/><rect x="298" y="661" width="1" height="1" fill="#fff"/><rect x="302" y="661" width="1" height="1" fill="#fff"/><rect x="296" y="667" width="2" height="2" fill="#b0b0b0"/><rect x="300" y="667" width="2" height="2" fill="#b0b0b0"/><rect x="298" y="666" width="1" height="1" fill="#fff"/><rect x="302" y="666" width="1" height="1" fill="#fff"/><rect x="296" y="672" width="2" height="2" fill="#b0b0b0"/><rect x="300" y="672" width="2" height="2" fill="#b0b0b0"/><rect x="298" y="671" width="1" height="1" fill="#fff"/><rect x="302" y="671" width="1" height="1" fill="#fff"/><rect x="296" y="677" width="2" height="2" fill="#b0b0b0"/><rect x="300" y="677" width="2" height="2" fill="#b0b0b0"/><rect x="298" y="676" width="1" height="1" fill="#fff"/><rect x="302" y="676" width="1" height="1" fill="#fff"/><rect x="296" y="682" width="2" height="2" fill="#b0b0b0"/><rect x="300" y="682" width="2" height="2" fill="#b0b0b0"/><rect x="298" y="681" width="1" height="1" fill="#fff"/><rect x="302" y="681" width="1" height="1" fill="#fff"/><rect x="296" y="687" width="2" height="2" fill="#b0b0b0"/><rect x="300" y="687" width="2" height="2" fill="#b0b0b0"/><rect x="298" y="686" width="1" height="1" fill="#fff"/><rect x="302" y="686" width="1" height="1" fill="#fff"/></svg>
<div class="a" style="left:295px;top:427px;width:16px;height:16px;background:linear-gradient(#e8a8a0,#d07068);border:1px solid #8a3a3a;border-radius:2px"></div>
<svg style="left:295px;top:427px" width="16" height="16"><path d="M4.5 4.5 l7 7 M11.5 4.5 l-7 7" stroke="#fff" stroke-width="2.2"/></svg>
<div class="a" style="left:312px;top:446px;width:743px;height:1px;background:#8a8a8a"></div>
<div class="a" style="left:314px;top:427px;width:83px;height:19px;background:#f0f0f0;border:1px solid #a0a0a0;border-bottom:none"></div>
<div class="t" style="left:317px;top:431px;font-size:11px;color:#111;letter-spacing:-0.3px">Check Points</div>
<div class="a" style="left:384px;top:433px;width:10px;height:10px;background:linear-gradient(#e4d0cc,#b8908a);border:1px solid #7a4a4a"></div><svg style="left:384px;top:433px" width="10" height="10"><path d="M2.5 2.5 l5 5 M7.5 2.5 l-5 5" stroke="#5a3a3a" stroke-width="2.6"/><path d="M2.5 2.5 l5 5 M7.5 2.5 l-5 5" stroke="#fff" stroke-width="1.3"/></svg>
<div class="a" style="left:555px;top:427px;width:140px;height:19px;background:#f0f0f0;border:1px solid #a0a0a0;border-bottom:none"></div>
<div class="t" style="left:558px;top:431px;font-size:11px;color:#111;letter-spacing:-0.22px">PFD Load Configurations</div>
<div class="a" style="left:682px;top:433px;width:10px;height:10px;background:linear-gradient(#e4d0cc,#b8908a);border:1px solid #7a4a4a"></div><svg style="left:682px;top:433px" width="10" height="10"><path d="M2.5 2.5 l5 5 M7.5 2.5 l-5 5" stroke="#5a3a3a" stroke-width="2.6"/><path d="M2.5 2.5 l5 5 M7.5 2.5 l-5 5" stroke="#fff" stroke-width="1.3"/></svg>
<div class="a" style="left:694px;top:427px;width:113px;height:19px;background:#f0f0f0;border:1px solid #a0a0a0;border-bottom:none"></div>
<div class="t" style="left:697px;top:431px;font-size:11px;color:#111;letter-spacing:-0.4px">PFD Design Checks</div>
<div class="a" style="left:794px;top:433px;width:10px;height:10px;background:linear-gradient(#e4d0cc,#b8908a);border:1px solid #7a4a4a"></div><svg style="left:794px;top:433px" width="10" height="10"><path d="M2.5 2.5 l5 5 M7.5 2.5 l-5 5" stroke="#5a3a3a" stroke-width="2.6"/><path d="M2.5 2.5 l5 5 M7.5 2.5 l-5 5" stroke="#fff" stroke-width="1.3"/></svg>
<div class="a" style="left:396px;top:427px;width:160px;height:20px;background:#fff;border:1px solid #8a8a8a;border-bottom:none"></div>
<div class="t" style="left:400px;top:432px;font-size:11px;font-weight:bold;color:#111;letter-spacing:0.13px">PFD Code Configurations</div>
<div class="a" style="left:543px;top:433px;width:10px;height:10px;background:linear-gradient(#e4d0cc,#b8908a);border:1px solid #7a4a4a"></div><svg style="left:543px;top:433px" width="10" height="10"><path d="M2.5 2.5 l5 5 M7.5 2.5 l-5 5" stroke="#5a3a3a" stroke-width="2.6"/><path d="M2.5 2.5 l5 5 M7.5 2.5 l-5 5" stroke="#fff" stroke-width="1.3"/></svg>
<div class="a" style="left:312px;top:447px;width:743px;height:248px;background:#f2f2f2;border-left:1px solid #fafafa;border-right:1px solid #707070;border-bottom:2px solid #707070"></div>
<div class="a" style="left:315px;top:449px;width:735px;height:25px;background:linear-gradient(#f6f6f6,#fbfbfb 25%,#e2e2e2);border-bottom:2px solid #6e6e6e"></div>
<svg style="left:310px;top:445px" width="400" height="30">
 <path d="M11 16 h12 M17 10 v12" stroke="#1a3a98" stroke-width="2.6"/>
 <path d="M35 12 h11 M40.5 9 v8" stroke="#1a3a98" stroke-width="2"/><path d="M37 16 l3.5 3.5 l3.5 -3.5" stroke="#1a3a98" stroke-width="1.8" fill="none"/>
 <rect x="35.5" y="20.5" width="11" height="3" fill="#fff" stroke="#111" stroke-width="1.2"/>
 <rect x="54" y="7" width="1.2" height="17" fill="#9a9a9a"/>
 <path d="M71 10 l6 6 h-3.5 v3 h-5 v-3 h-3.5z" fill="#9a9a9a"/><rect x="66" y="20" width="11" height="3" fill="#f8f8f8" stroke="#9a9a9a"/>
 <path d="M88 9 h12 v3 h-3 v3 h3 l-6 6 l-6 -6 h3 v-3 h-3z" fill="#9a9a9a"/>
 <path d="M109 9 h14 v5 l-2 2 v2 l-2 2 v2 l-3 2 h-4 l-2 -2 v-2 l-2 -2 v-2 l-1 -2z" fill="#8e8e8e"/>
 <rect x="134" y="10" width="13" height="13" rx="1.5" fill="#9a9a9a"/><path d="M132.5 9 v15" stroke="#9a9a9a" stroke-dasharray="1.5 1"/><rect x="137" y="19" width="6" height="1.3" fill="#fff"/>
 <rect x="154" y="7" width="1.2" height="17" fill="#9a9a9a"/>
 <path d="M164 10 h6 l2 2 h8 v10 h-16z" fill="#9a9a9a"/><path d="M168 16 l4 -3 v2 h4 v2 h-4 v2z" fill="#d0d0d0"/>
 <path d="M190 10 l3 -4 l3 4 M189 9 v3 M198 15 v6 l4 0" stroke="#aaa" stroke-width="1" fill="none" stroke-dasharray="1.5 1"/><text x="198" y="23" font-family="Liberation Sans" font-size="8" fill="#aaa">B</text>
 <rect x="208" y="7" width="1.2" height="17" fill="#9a9a9a"/>
</svg>
<svg style="left:500px;top:445px" width="200" height="30">
 <path d="M30 8 h8 l3 3 v8 h-11z" fill="#fff" stroke="#8a8a8a" stroke-width="1.3"/><path d="M26 13 h8 l3 3 v8 h-11z" fill="#fff" stroke="#8a8a8a" stroke-width="1.3"/><path d="M28 17 h6 M28 19.5 h6 M28 22 h6" stroke="#8a8a8a"/>
 <rect x="51" y="10" width="12" height="14" rx="1" fill="#9a9a9a"/><rect x="54" y="8" width="6" height="3" fill="#9a9a9a"/><rect x="54" y="13" width="6" height="7" fill="#f4f4f4"/>
 <path d="M73 9 h9 l4 4 v3 l2 2 v3 l-2 2 v1 h-13z" fill="#9a9a9a"/>
 <rect x="95" y="7" width="1.2" height="17" fill="#9a9a9a"/>
 <path d="M106 10 l11 11 M117 10 l-11 11" stroke="#9a9a9a" stroke-width="1.8"/>
 <rect x="126" y="7" width="1.2" height="17" fill="#9a9a9a"/>
 <path d="M136 11 h14" stroke="#2a6ad0" stroke-width="1.6"/><path d="M139 8 l-3 3 l3 3 M147 8 l3 3 l-3 3" stroke="#2a6ad0" stroke-width="1.6" fill="none"/>
 <rect x="136.5" y="16.5" width="14" height="7" fill="#dce6f4" stroke="#1a3a78"/>
 <path d="M159 11 h14" stroke="#2a6ad0" stroke-width="1.6"/><path d="M162 8 l-3 3 l3 3 M170 8 l3 3 l-3 3" stroke="#2a6ad0" stroke-width="1.6" fill="none"/>
 <rect x="158.5" y="16.5" width="15" height="7" fill="#fff" stroke="#111"/><text x="160" y="23" font-family="Liberation Sans" font-weight="bold" font-size="6.5" fill="#111">123</text>
 <rect x="181" y="7" width="1.2" height="17" fill="#9a9a9a"/>
</svg>
<div class="a" style="left:316px;top:474px;width:733px;height:216px;background:#fff;border-left:2px solid #8a8a8a;border-right:1px solid #e2e2e2;border-bottom:1px solid #e2e2e2"></div>
<div class="a" style="left:317px;top:474px;width:1px;height:215px;background:#5e5e5e"></div>
<div class="a" style="left:318px;top:474px;width:18px;height:215px;background:#fff;border-right:1px solid #e0e0e0"></div>
<div class="a" style="left:318px;top:474px;width:438px;height:17px;background:linear-gradient(#f4f4f4,#ececec);border-bottom:1px solid #8a8a8a;border-right:1px solid #a0a0a0"></div>
<div class="a" style="left:335px;top:474px;width:1px;height:16px;background:#a0a0a0"></div>
<div class="a" style="left:495px;top:474px;width:1px;height:16px;background:#a0a0a0"></div>
<div class="a" style="left:615px;top:474px;width:1px;height:16px;background:#a0a0a0"></div>
<div class="t" style="left:342px;top:478px;font-size:11px;color:#111;letter-spacing:-0.2px">Name</div>
<div class="t" style="left:502px;top:478px;font-size:11px;color:#111;letter-spacing:-0.2px">Section</div>
<div class="t" style="left:622px;top:478px;font-size:11px;color:#111;letter-spacing:-0.2px">Code</div>
<div class="a" style="left:495px;top:491px;width:1px;height:199px;background:#e4e4e4"></div>
<div class="a" style="left:615px;top:491px;width:1px;height:199px;background:#e4e4e4"></div>
<div class="a" style="left:755px;top:491px;width:1px;height:199px;background:#e4e4e4"></div>
<div class="a" style="left:318px;top:491px;width:18px;height:17px;background:#f0f0f0;border-bottom:1px solid #8a8a8a;border-right:1px solid #a0a0a0"></div>
<div class="a" style="left:336px;top:508px;width:420px;height:1px;background:#e4e4e4"></div>
<div class="t" style="left:345px;top:493.5px;font-size:11px;color:#111;letter-spacing:-0.26px">PFDConfiguration1</div>
<div class="t" style="left:505px;top:493.5px;font-size:11px;color:#111">pier</div>
<div class="t" style="left:624px;top:493.5px;font-size:11px;color:#111;letter-spacing:-0.25px">SFHB H29 <span style="letter-spacing:-1.1px">III</span></div>
<div class="a" style="left:598px;top:493px;width:15px;height:14px;background:linear-gradient(#fdfbf2,#ece4cc);border:1.3px solid #4e7a36;border-radius:3px"></div>
<svg style="left:598px;top:493px" width="15" height="14"><path d="M3.5 5 h8 l-4 4.5z" fill="#8a8a8a"/></svg>
<div class="a" style="left:738px;top:493px;width:15px;height:14px;background:linear-gradient(#fdfbf2,#ece4cc);border:1.3px solid #4e7a36;border-radius:3px"></div>
<svg style="left:738px;top:493px" width="15" height="14"><path d="M3.5 5 h8 l-4 4.5z" fill="#8a8a8a"/></svg>
<div class="a" style="left:318px;top:509px;width:18px;height:17px;background:#f0f0f0;border-bottom:1px solid #8a8a8a;border-right:1px solid #a0a0a0"></div>
<div class="a" style="left:336px;top:526px;width:420px;height:1px;background:#e4e4e4"></div>
<div class="t" style="left:345px;top:511.5px;font-size:11px;color:#111;letter-spacing:-0.26px">PFDConfiguration2</div>
<div class="t" style="left:505px;top:511.5px;font-size:11px;color:#111">pier</div>
<div class="t" style="left:624px;top:511.5px;font-size:11px;color:#111;letter-spacing:-0.25px">SFHB H29 <span style="letter-spacing:-1.3px">IV</span></div>
<div class="a" style="left:598px;top:511px;width:15px;height:14px;background:linear-gradient(#fdfbf2,#ece4cc);border:1.3px solid #4e7a36;border-radius:3px"></div>
<svg style="left:598px;top:511px" width="15" height="14"><path d="M3.5 5 h8 l-4 4.5z" fill="#8a8a8a"/></svg>
<div class="a" style="left:738px;top:511px;width:15px;height:14px;background:linear-gradient(#fdfbf2,#ece4cc);border:1.3px solid #4e7a36;border-radius:3px"></div>
<svg style="left:738px;top:511px" width="15" height="14"><path d="M3.5 5 h8 l-4 4.5z" fill="#8a8a8a"/></svg>
<div class="a" style="left:318px;top:527px;width:18px;height:17px;background:#f0f0f0;border-bottom:1px solid #8a8a8a;border-right:1px solid #a0a0a0"></div>
<div class="a" style="left:336px;top:544px;width:420px;height:1px;background:#e4e4e4"></div>
<div class="t" style="left:345px;top:529.5px;font-size:11px;color:#111;letter-spacing:-0.26px">PFDConfiguration3</div>
<div class="t" style="left:505px;top:529.5px;font-size:11px;color:#111">pier</div>
<div class="t" style="left:624px;top:529.5px;font-size:11px;color:#111;letter-spacing:-0.25px">SFHB H29 V</div>
<div class="a" style="left:598px;top:529px;width:15px;height:14px;background:linear-gradient(#fdfbf2,#ece4cc);border:1.3px solid #4e7a36;border-radius:3px"></div>
<svg style="left:598px;top:529px" width="15" height="14"><path d="M3.5 5 h8 l-4 4.5z" fill="#8a8a8a"/></svg>
<div class="a" style="left:738px;top:529px;width:15px;height:14px;background:linear-gradient(#fdfbf2,#ece4cc);border:1.3px solid #4e7a36;border-radius:3px"></div>
<svg style="left:738px;top:529px" width="15" height="14"><path d="M3.5 5 h8 l-4 4.5z" fill="#8a8a8a"/></svg>
<svg style="left:516px;top:585px" width="14" height="20"><path d="M1 1 v14 l3.5 -3 l2.5 5.5 l2 -1 l-2.5 -5.5 h4.5z" fill="#fff" stroke="#111" stroke-width="1"/></svg>
<svg style="left:0;top:0" width="1056" height="716"><path d="M447 320 h48 v53 h24 l-47.5 53 l-48.5 -53 h24z" fill="#dc1c2a"/></svg>
<div class="a" style="left:1px;top:695px;width:1054px;height:20px;background:#f0f0f0;border-top:1px solid #dcdcdc"></div>
<div class="a" style="left:257px;top:697px;width:1px;height:17px;background:#d0d0d0"></div>
<div class="a" style="left:507px;top:697px;width:1px;height:17px;background:#d0d0d0"></div>
<div class="a" style="left:907px;top:697px;width:1px;height:17px;background:#d0d0d0"></div>
<div class="t" style="left:4px;top:701px;font-size:11px;color:#111;letter-spacing:-0.18px">Mode : Edit</div>
<div class="t" style="left:262px;top:701px;font-size:11px;color:#111;letter-spacing:0.13px">x=141.000m, y=-26.000m, z=0.000m</div>
</body></html>
